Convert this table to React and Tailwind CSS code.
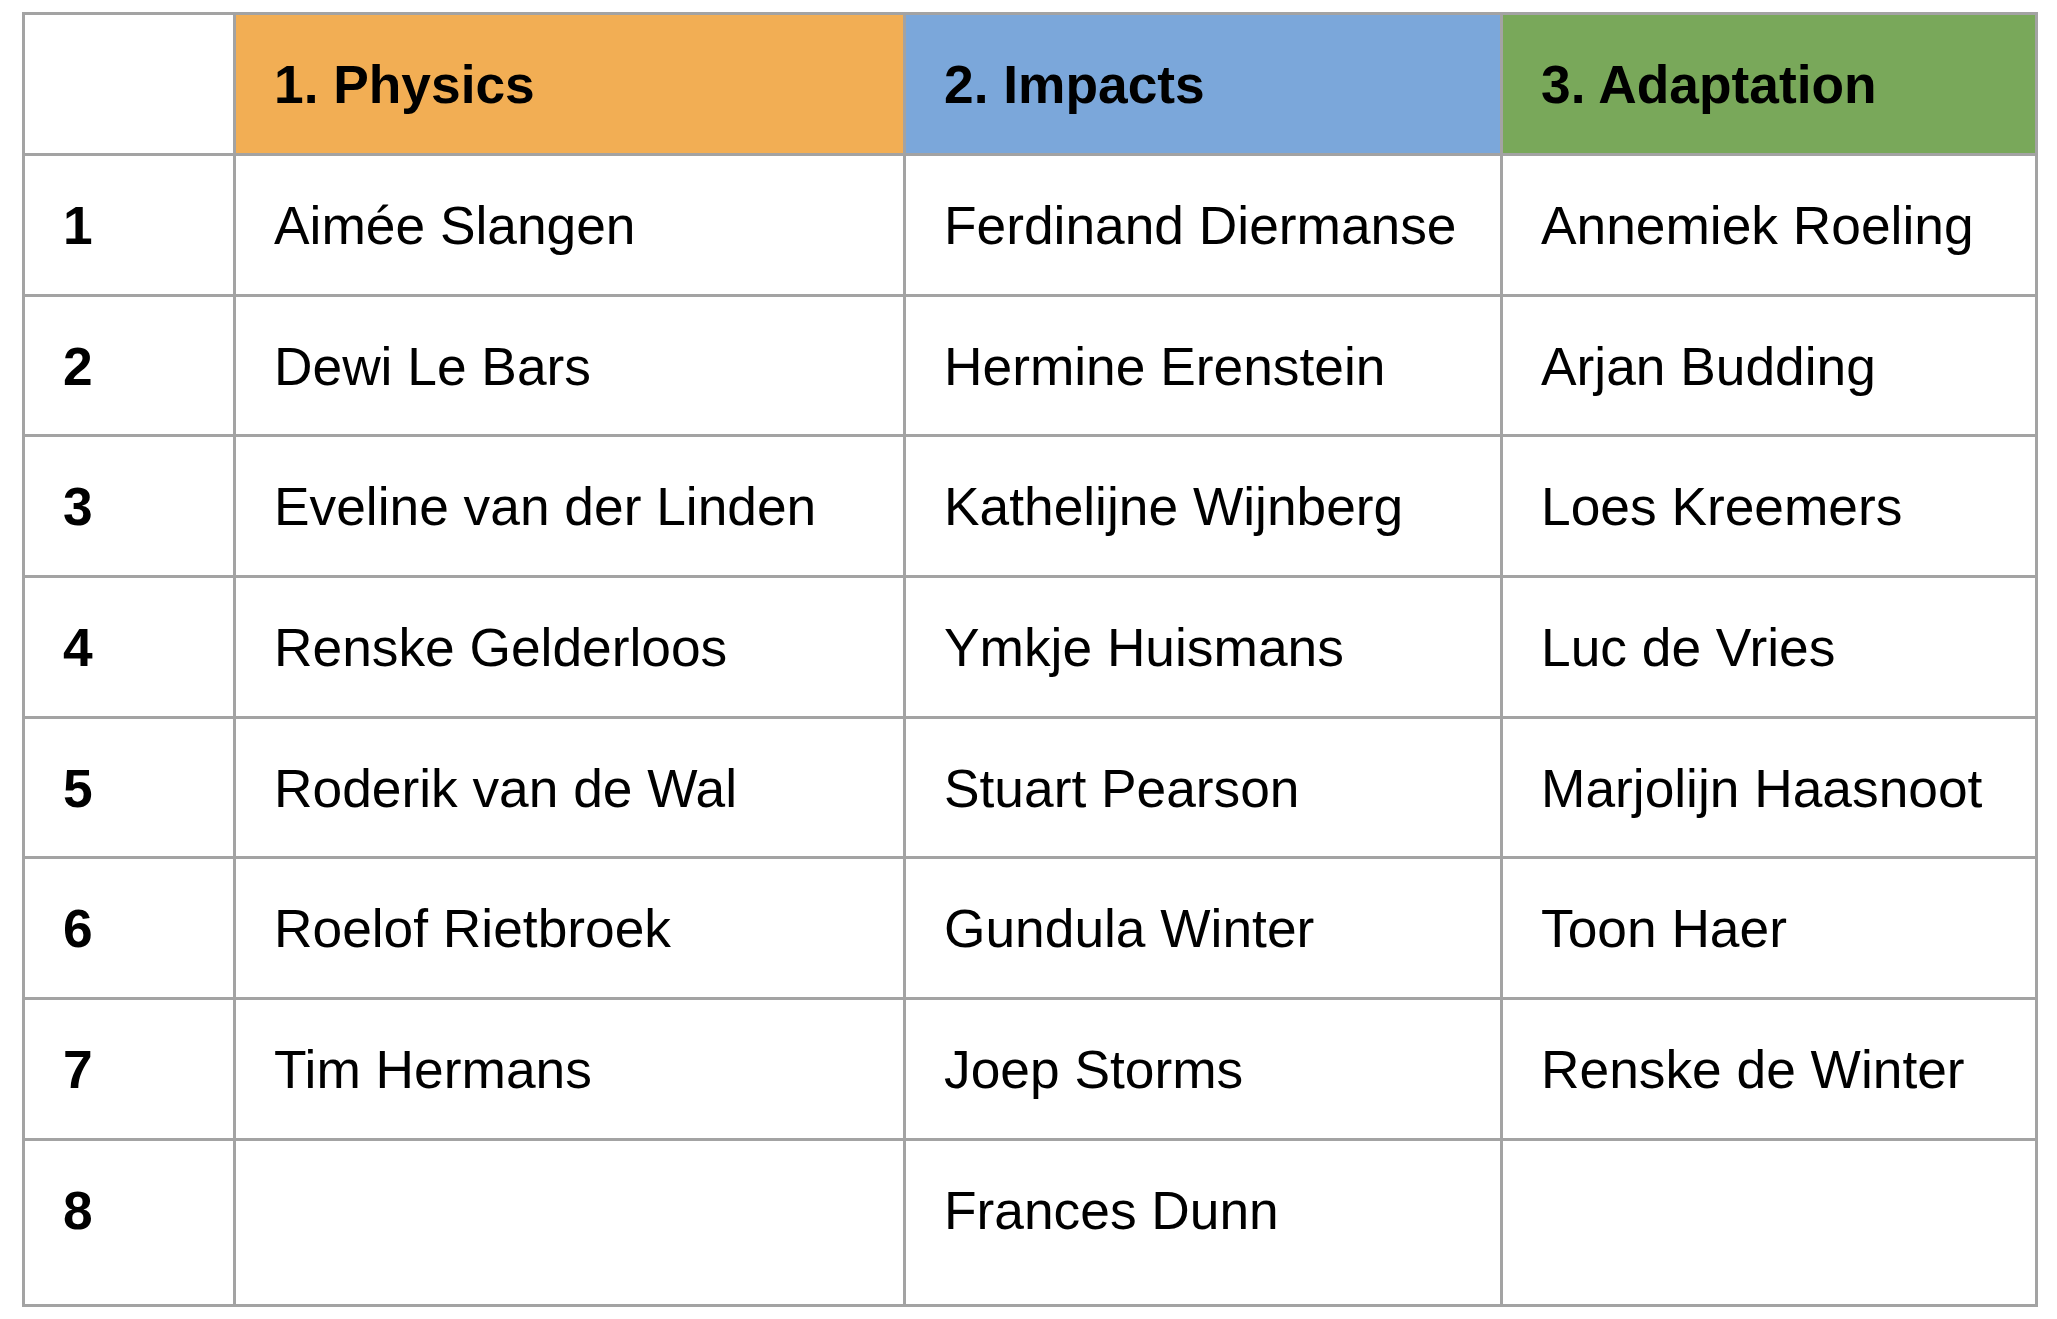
const headers = [
  { label: '1. Physics', bg: 'bg-[#f2ae54]' },
  { label: '2. Impacts', bg: 'bg-[#7ba7da]' },
  { label: '3. Adaptation', bg: 'bg-[#79a85a]' },
];

const rows = [
  ['Aimée Slangen', 'Ferdinand Diermanse', 'Annemiek Roeling'],
  ['Dewi Le Bars', 'Hermine Erenstein', 'Arjan Budding'],
  ['Eveline van der Linden', 'Kathelijne Wijnberg', 'Loes Kreemers'],
  ['Renske Gelderloos', 'Ymkje Huismans', 'Luc de Vries'],
  ['Roderik van de Wal', 'Stuart Pearson', 'Marjolijn Haasnoot'],
  ['Roelof Rietbroek', 'Gundula Winter', 'Toon Haer'],
  ['Tim Hermans', 'Joep Storms', 'Renske de Winter'],
  ['', 'Frances Dunn', ''],
];

const cell = 'pl-[38px] pr-4 pt-[40px] leading-[60px] whitespace-nowrap';

export default function App() {
  return (
    <div className="min-h-screen bg-white pt-[12px] pl-[22px] font-['Liberation_Sans',Arial,sans-serif] text-[53.3px] text-black">
      <div className="grid w-fit grid-cols-[208px_667px_594px_532px] grid-rows-[138px_repeat(7,137.7px)_163.5px] gap-[3px] bg-[#a3a3a3] p-[3px]">
        <div className="bg-white" />
        {headers.map((h) => (
          <div key={h.label} className={`${h.bg} ${cell} font-bold`}>
            {h.label}
          </div>
        ))}
        {rows.map((r, i) => (
          <div key={i} className="contents">
            <div className={`bg-white ${cell} font-bold`}>{i + 1}</div>
            {r.map((name, j) => (
              <div key={j} className={`bg-white ${cell}`}>
                {name}
              </div>
            ))}
          </div>
        ))}
      </div>
    </div>
  );
}
